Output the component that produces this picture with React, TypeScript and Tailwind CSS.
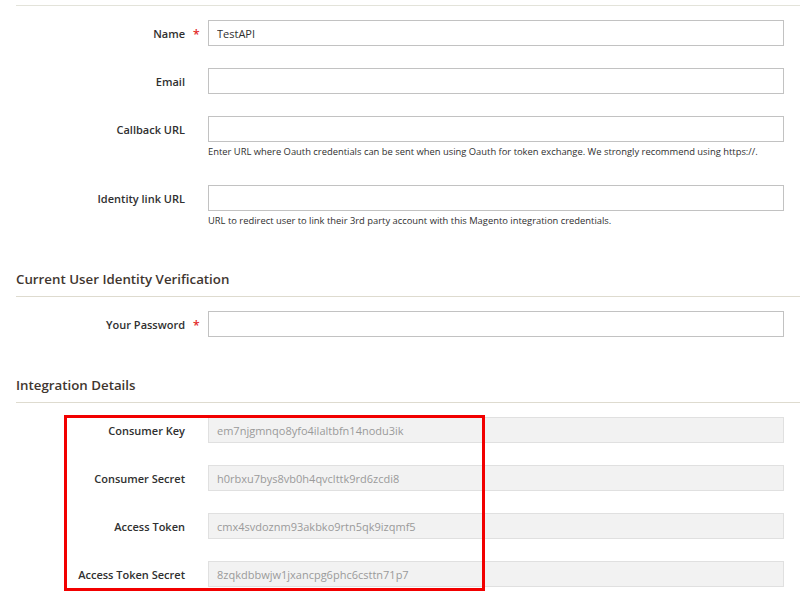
import React from "react";

type FieldProps = {
  label: string;
  required?: boolean;
  value?: string;
  disabled?: boolean;
  note?: string;
  className?: string;
};

function Field({ label, required, value = "", disabled, note, className = "" }: FieldProps) {
  return (
    <div className={`flex items-start ${className}`}>
      <div className="flex h-[26px] w-[192px] shrink-0 items-center justify-end pr-[23px]">
        <span className="relative text-[11px] leading-none font-semibold text-[#303030]">
          {label}
          {required && (
            <span className="absolute left-[calc(100%+8px)] top-[1px] text-[12px] leading-none text-[#e22626]">*</span>
          )}
        </span>
      </div>
      <div className="w-[576px]">
        <input
          readOnly
          value={value}
          className={
            disabled
              ? "block h-[26px] w-full border border-[#e0e0e0] bg-[#f2f2f2] px-[8px] text-[11px] text-[#9a9a9a] outline-none"
              : "block h-[26px] w-full border border-[#c2c2c2] bg-white px-[8px] text-[11px] text-[#303030] outline-none"
          }
        />
        {note && (
          <div className="mt-[4px] whitespace-nowrap text-[9.4px] leading-[12px] text-[#303030]">{note}</div>
        )}
      </div>
    </div>
  );
}

function SectionTitle({ children, className = "" }: { children: React.ReactNode; className?: string }) {
  return (
    <div className={`border-b border-[#dedbcf] pb-[7px] ${className}`}>
      <h2 className="text-[13.3px] leading-[20px] font-semibold text-[#41362f]">{children}</h2>
    </div>
  );
}

export default function App() {
  return (
    <div
      className="relative h-[602px] w-[800px] overflow-hidden bg-white pl-4"
      style={{ fontFamily: '"Open Sans", "Liberation Sans", sans-serif' }}
    >
      <div className="h-[6px] border-b border-[#e3e3da]" />

      <Field label="Name" required value="TestAPI" className="mt-[14px]" />
      <Field label="Email" className="mt-[22px]" />
      <Field
        label="Callback URL"
        className="mt-[22px]"
        note="Enter URL where Oauth credentials can be sent when using Oauth for token exchange. We strongly recommend using https://."
      />
      <Field
        label="Identity link URL"
        className="mt-[27px]"
        note="URL to redirect user to link their 3rd party account with this Magento integration credentials."
      />

      <SectionTitle className="mt-[42px]">Current User Identity Verification</SectionTitle>
      <Field label="Your Password" required className="mt-[14px]" />

      <SectionTitle className="mt-[38px]">Integration Details</SectionTitle>
      <Field label="Consumer Key" disabled value="em7njgmnqo8yfo4ilaltbfn14nodu3ik" className="mt-[14px]" />
      <Field label="Consumer Secret" disabled value="h0rbxu7bys8vb0h4qvclttk9rd6zcdi8" className="mt-[22px]" />
      <Field label="Access Token" disabled value="cmx4svdoznm93akbko9rtn5qk9izqmf5" className="mt-[22px]" />
      <Field label="Access Token Secret" disabled value="8zqkdbbwjw1jxancpg6phc6csttn71p7" className="mt-[22px]" />

      {/* highlight box */}
      <div className="pointer-events-none absolute left-[64px] top-[415px] h-[176px] w-[421px] border-[3px] border-[#f20000]" />
    </div>
  );
}
